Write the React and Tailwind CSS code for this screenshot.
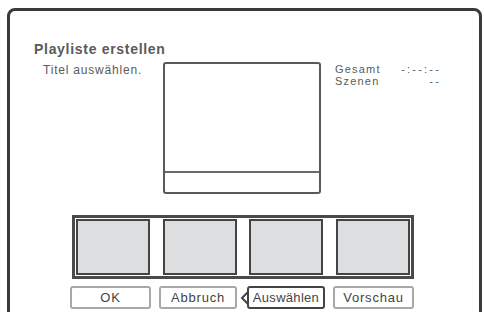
import React from 'react';

const thumbs = [0, 1, 2, 3];

function Button({ label, className = '' }) {
  return (
    <div
      className={`h-[23px] flex items-center justify-center rounded-[3px] border-2 border-[#a8a8a8] bg-white text-[13px] tracking-[0.8px] text-[#444] ${className}`}
    >
      {label}
    </div>
  );
}

export default function App() {
  return (
    <div
      className="w-[484px] h-[312px] overflow-hidden bg-white"
      style={{ fontFamily: '"Liberation Sans", Arial, sans-serif' }}
    >
      <div className="ml-[7px] mt-[8px] w-[475px] h-[330px] border-[3px] border-[#3a3a3a] rounded-[8px] pt-[29px]">
        {/* Title */}
        <div className="pl-[24px] text-[14px] leading-[18px] font-bold text-[#5a5a5a] tracking-[0.7px]">
          Playliste erstellen
        </div>

        {/* Preview row */}
        <div className="flex mt-[4px]">
          <div className="w-[153px] pl-[33px] pt-[1px] text-[12px] leading-[15px] tracking-[0.8px] text-[#5a5a5a]">
            Titel auswählen.
          </div>
          <div className="w-[158px] h-[132px] border-2 border-[#5a5a5a] rounded-[3px] flex flex-col">
            <div className="flex-1 border-b-2 border-[#6a6a6a]" />
            <div className="h-[19px]" />
          </div>
          <div className="ml-[14px] pt-[1px] text-[11px] leading-[12px] tracking-[1.2px] text-[#5a5a5a]">
            <div className="flex w-[106px] justify-between">
              <span>Gesamt</span>
              <span className="tracking-[2.2px]">-:--:--</span>
            </div>
            <div className="flex w-[106px] justify-between">
              <span>Szenen</span>
              <span className="tracking-[2.2px]">--</span>
            </div>
          </div>
        </div>

        {/* Thumbnail strip */}
        <div className="ml-[62px] mt-[21px] w-[342px] h-[64px] border-[3px] border-[#4a4a4a] p-[1px] flex justify-between">
          {thumbs.map((t) => (
            <div
              key={t}
              className="w-[74px] h-full border-2 border-[#444] bg-[#dcdedf]"
            />
          ))}
        </div>

        {/* Buttons */}
        <div className="flex items-center ml-[60px] mt-[7px]">
          <Button label="OK" className="w-[81px]" />
          <Button label="Abbruch" className="w-[78px] ml-[8px]" />
          <div className="relative ml-[10px] w-[78px]">
            <svg
              className="absolute left-[-7px] top-[5px]"
              width="9"
              height="14"
              viewBox="0 0 9 14"
            >
              <path d="M8 1 L2 7 L8 13" fill="white" stroke="#444" strokeWidth="2" />
            </svg>
            <div className="relative h-[23px] flex items-center justify-center rounded-[3px] border-2 border-[#444] bg-white text-[13px] text-[#444] tracking-[0.3px]">
              Auswählen
            </div>
          </div>
          <Button label="Vorschau" className="w-[81px] ml-[8px]" />
        </div>
      </div>
    </div>
  );
}
